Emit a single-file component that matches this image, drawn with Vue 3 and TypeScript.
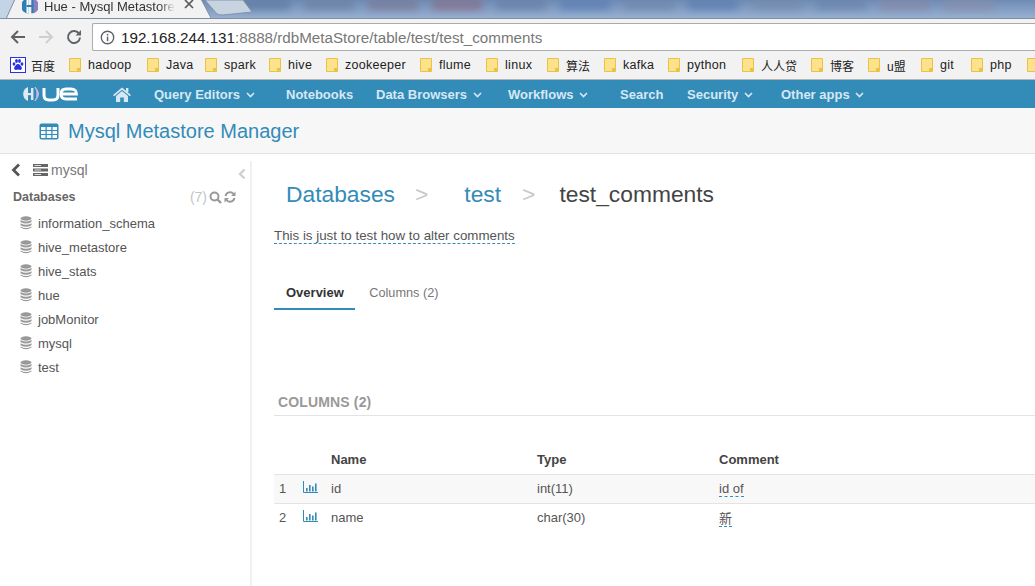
<template>
  <div class="page">
    <div class="tabstrip">
      <div class="blur-row">
        <span v-for="(c, i) in blurs" :key="i" class="blur" :style="{ background: c }"></span>
      </div>
      <svg class="tab-shape" width="260" height="19" viewBox="0 0 260 19">
        <path d="M0 0 H15 L7 18 H0 Z" fill="#c4d4e7" />
        <path d="M205 0 L217 14 Q219 15 223 15 L252 12 L243 0 Z" fill="#c8d3e0" stroke="#8094ad" />
        <path d="M6 19 L15 -1 L201 -1 L211 18 L211 19 Z" fill="#f2f2f2" stroke="#7f8fa3" />
      </svg>
      <div class="tab">
        <svg class="favicon" width="16" height="16" viewBox="0 0 16 16">
          <path d="M6.5 0.5 A7.5 7.5 0 0 0 6.5 15.5 Z" fill="#2f7fb6" />
          <path d="M9.5 0.5 A7.5 7.5 0 0 1 9.5 15.5 Z" fill="#8b7fc0" />
          <rect x="4.5" y="1" width="2" height="14" fill="#fff" />
          <rect x="9.5" y="1" width="2" height="14" fill="#2f7fb6" />
          <rect x="4.5" y="7" width="7" height="2" fill="#2f7fb6" />
        </svg>
        <span class="tab-title">Hue - Mysql Metastore</span>
        <svg class="tab-close" width="10" height="10" viewBox="0 0 10 10">
          <path d="M1 1 L9 9 M9 1 L1 9" stroke="#5a5a5a" stroke-width="1.7" />
        </svg>
      </div>
    </div>

    <div class="toolbar">
      <svg width="16" height="16" viewBox="0 0 16 16" class="nav-btn">
        <path d="M15 8 H2.5 M8 2 L2 8 L8 14" fill="none" stroke="#5f6368" stroke-width="2" />
      </svg>
      <svg width="16" height="16" viewBox="0 0 16 16" class="nav-btn">
        <path d="M1 8 H13.5 M8 2 L14 8 L8 14" fill="none" stroke="#cfcfcf" stroke-width="2" />
      </svg>
      <svg width="16" height="16" viewBox="0 0 16 16" class="nav-btn">
        <path d="M13.2 5 A6 6 0 1 0 14 8.5" fill="none" stroke="#5f6368" stroke-width="2" />
        <path d="M9.5 6.5 H15 V1 Z" fill="#5f6368" />
      </svg>
      <div class="omnibox">
        <svg width="15" height="15" viewBox="0 0 15 15" class="info">
          <circle cx="7.5" cy="7.5" r="6.2" fill="none" stroke="#5f6368" stroke-width="1.4" />
          <rect x="6.8" y="6.6" width="1.5" height="4.6" fill="#5f6368" />
          <rect x="6.8" y="3.9" width="1.5" height="1.6" fill="#5f6368" />
        </svg>
        <span class="host">192.168.244.131</span><span class="path">:8888/rdbMetaStore/table/test/test_comments</span>
      </div>
    </div>

    <div class="bookmarks">
      <div class="bm baidu">
        <svg width="16" height="16" viewBox="0 0 16 16">
          <rect x="0.5" y="0.5" width="15" height="15" fill="#fff" stroke="#2932e1" />
          <g fill="#2932e1">
            <ellipse cx="4" cy="7" rx="1.4" ry="1.8" />
            <ellipse cx="6.5" cy="4" rx="1.4" ry="1.9" />
            <ellipse cx="9.5" cy="4" rx="1.4" ry="1.9" />
            <ellipse cx="12" cy="7" rx="1.4" ry="1.8" />
            <path d="M8 7 C6 7 5.5 9 4.5 10 C3.5 11.5 4.5 13 6 13 C7 13 7.5 12.6 8 12.6 C8.5 12.6 9 13 10 13 C11.5 13 12.5 11.5 11.5 10 C10.5 9 10 7 8 7 Z" />
          </g>
        </svg>
        <span class="bm-label cjk">百度</span>
      </div>
      <div v-for="b in bookmarks" :key="b.label" class="bm" :style="{ width: b.width + 'px' }">
        <svg width="12" height="14" viewBox="0 0 12 14" class="folder">
          <path d="M0.5 0.5 H11.5 V13.5 H0.5 Z" fill="#fde28d" stroke="#e9c343" />
          <rect x="8" y="10" width="3" height="3" fill="#e9c343" />
        </svg>
        <span class="bm-label" :class="{ cjk: hasCjk(b.label) }">{{ b.label }}</span>
      </div>
    </div>

    <nav class="navbar">
      <div class="logo">
        <svg width="56" height="16" viewBox="0 0 56 16">
          <path d="M6 1 A7.5 7.5 0 0 0 6 15 Z" fill="#dfe9f1" />
          <rect x="3.6" y="7" width="7" height="2.2" fill="#dfe9f1" />
          <rect x="9" y="2" width="2.4" height="12" fill="#dfe9f1" />
          <path d="M13 1 Q20 8 13 15 Q17 8 13 1 Z" fill="#cdb8e2" stroke="#cdb8e2" />
          <path d="M22 2 V9 Q22 14 27 14 H31 Q36 14 36 9 V2" fill="none" stroke="#fff" stroke-width="3" />
          <path d="M39 8 H54.5 Q54.5 3 49 3 H44 Q39 3 39 8 Q39 13 44 13 H55" fill="none" stroke="#fff" stroke-width="2.8" />
        </svg>
      </div>
      <svg class="home" width="18" height="15" viewBox="0 0 18 15">
        <path d="M9 0.5 L18 8 L16.8 9.2 L9 2.8 L1.2 9.2 L0 8 Z" fill="#d5e8f3" />
        <path d="M3 9 L9 4 L15 9 V15 H10.8 V10.5 H7.2 V15 H3 Z" fill="#d5e8f3" />
        <rect x="13" y="1" width="2.4" height="4" fill="#d5e8f3" />
      </svg>
      <div v-for="n in navItems" :key="n.label" class="nav-item" :style="{ width: n.width + 'px' }">
        {{ n.label }}
        <svg v-if="n.caret" class="caret" width="9" height="6" viewBox="0 0 9 6">
          <path d="M1 1 L4.5 4.5 L8 1" fill="none" stroke="#d5e8f3" stroke-width="1.6" />
        </svg>
      </div>
    </nav>

    <header class="subheader">
      <svg width="20" height="17" viewBox="0 0 20 17">
        <rect x="0.5" y="0.5" width="19" height="16" rx="2" fill="#338bb8" />
        <g fill="#f7f7f7">
          <rect x="2" y="4" width="4.5" height="3" />
          <rect x="7.75" y="4" width="4.5" height="3" />
          <rect x="13.5" y="4" width="4.5" height="3" />
          <rect x="2" y="8" width="4.5" height="3" />
          <rect x="7.75" y="8" width="4.5" height="3" />
          <rect x="13.5" y="8" width="4.5" height="3" />
          <rect x="2" y="12" width="4.5" height="3" />
          <rect x="7.75" y="12" width="4.5" height="3" />
          <rect x="13.5" y="12" width="4.5" height="3" />
        </g>
      </svg>
      <span>Mysql Metastore Manager</span>
    </header>

    <div class="body">
      <aside class="sidebar">
        <div class="side-top">
          <svg width="10" height="14" viewBox="0 0 10 14">
            <path d="M8 1.5 L2.5 7 L8 12.5" fill="none" stroke="#555" stroke-width="2.8" />
          </svg>
          <svg class="server" width="15" height="12" viewBox="0 0 15 12">
            <path d="M0 0 H15 V3 H0 Z M0 4.5 H15 V7.5 H0 Z M0 9 H15 V12 H0 Z" fill="#666" />
            <path d="M1.5 1.5 H8 M1.5 6 H8 M1.5 10.5 H8" stroke="#ddd" />
          </svg>
          <span class="side-db">mysql</span>
          <svg class="collapse" width="8" height="12" viewBox="0 0 8 12">
            <path d="M6.5 1.5 L2 6 L6.5 10.5" fill="none" stroke="#d0d0d0" stroke-width="2.4" />
          </svg>
        </div>
        <div class="side-head">
          <span class="side-title">Databases</span>
          <span class="side-count">(7)</span>
          <svg width="13" height="13" viewBox="0 0 13 13">
            <circle cx="5.5" cy="5.5" r="4" fill="none" stroke="#999" stroke-width="2" />
            <path d="M8.5 8.5 L12 12" stroke="#999" stroke-width="2.4" />
          </svg>
          <svg width="12" height="12" viewBox="0 0 12 12">
            <path d="M1.5 5 A4.6 4.6 0 0 1 9.6 3 M10.5 7 A4.6 4.6 0 0 1 2.4 9" fill="none" stroke="#999" stroke-width="1.9" />
            <path d="M11.5 0.5 V5 H7 Z M0.5 11.5 V7 H5 Z" fill="#999" />
          </svg>
        </div>
        <ul class="db-list">
          <li v-for="db in databases" :key="db">
            <svg width="12" height="14" viewBox="0 0 12 14">
              <ellipse cx="6" cy="2.5" rx="5.5" ry="2.2" fill="#999" />
              <path d="M0.5 4 Q6 7 11.5 4 V6 Q6 9 0.5 6 Z M0.5 7.2 Q6 10.2 11.5 7.2 V9.2 Q6 12.2 0.5 9.2 Z M0.5 10.4 Q6 13.4 11.5 10.4 V11.5 Q6 14.8 0.5 11.5 Z" fill="#999" />
            </svg>
            <span>{{ db }}</span>
          </li>
        </ul>
      </aside>

      <main class="content">
        <div class="crumbs">
          <a class="crumb">Databases</a>
          <span class="sep sep-a">&gt;</span>
          <a class="crumb">test</a>
          <span class="sep sep-b">&gt;</span>
          <span class="crumb-current">test_comments</span>
        </div>
        <div class="desc"><span class="editable">This is just to test how to alter comments</span></div>
        <div class="tabs">
          <div class="tab-link active">Overview</div>
          <div class="tab-link">Columns (2)</div>
        </div>
        <div class="section-title">COLUMNS (2)</div>
        <table class="cols">
          <thead>
            <tr>
              <th class="c-num"></th>
              <th class="c-icon"></th>
              <th class="c-name">Name</th>
              <th class="c-type">Type</th>
              <th>Comment</th>
            </tr>
          </thead>
          <tbody>
            <tr v-for="(col, i) in columns" :key="col.name" :class="{ odd: i === 0 }">
              <td class="c-num">{{ i + 1 }}</td>
              <td class="c-icon">
                <svg width="15" height="12" viewBox="0 0 15 12">
                  <path d="M0.5 0 V11.5 H15" fill="none" stroke="#338bb8" />
                  <rect x="3" y="7" width="1.6" height="3.5" fill="#338bb8" />
                  <rect x="6" y="4" width="1.6" height="6.5" fill="#338bb8" />
                  <rect x="9" y="5.5" width="1.6" height="5" fill="#338bb8" />
                  <rect x="12" y="2.5" width="1.6" height="8" fill="#338bb8" />
                </svg>
              </td>
              <td>{{ col.name }}</td>
              <td>{{ col.type }}</td>
              <td><span class="editable">{{ col.comment }}</span></td>
            </tr>
          </tbody>
        </table>
      </main>
    </div>
  </div>
</template>

<script setup lang="ts">
const blurs = ['#56709a', '#6a7a99', '#7b6f88', '#8c5f74', '#62789f', '#4f76b0', '#6a82a6', '#4f74ad', '#7388a6', '#667fa6', '#8a86a0', '#8c8ca5']

const bookmarks = [
  { label: 'hadoop', width: 78 },
  { label: 'Java', width: 58 },
  { label: 'spark', width: 64 },
  { label: 'hive', width: 57 },
  { label: 'zookeeper', width: 94 },
  { label: 'flume', width: 66 },
  { label: 'linux', width: 61 },
  { label: '算法', width: 57 },
  { label: 'kafka', width: 64 },
  { label: 'python', width: 74 },
  { label: '人人贷', width: 69 },
  { label: '博客', width: 57 },
  { label: 'u盟', width: 53 },
  { label: 'git', width: 50 },
  { label: 'php', width: 56 },
  { label: '', width: 12 },
]

const navItems = [
  { label: 'Query Editors', width: 132, caret: true },
  { label: 'Notebooks', width: 90, caret: false },
  { label: 'Data Browsers', width: 132, caret: true },
  { label: 'Workflows', width: 112, caret: true },
  { label: 'Search', width: 67, caret: false },
  { label: 'Security', width: 94, caret: true },
  { label: 'Other apps', width: 100, caret: true },
]

const databases = ['information_schema', 'hive_metastore', 'hive_stats', 'hue', 'jobMonitor', 'mysql', 'test']

const columns = [
  { name: 'id', type: 'int(11)', comment: 'id of' },
  { name: 'name', type: 'char(30)', comment: '新' },
]

function hasCjk(label: string): boolean {
  return /[\u4e00-\u9fff]/.test(label)
}
</script>

<style>
html, body {
  margin: 0;
  background: #fff;
  overflow: hidden;
}
</style>

<style scoped>
.page {
  width: 1035px;
  height: 586px;
  overflow: hidden;
  display: flex;
  flex-direction: column;
  font-family: "Liberation Sans", "Noto Sans CJK SC", sans-serif;
  color: #444;
  font-size: 13px;
}

.tabstrip {
  position: relative;
  height: 19px;
  background: linear-gradient(#6f8bb4, #97b0d2);
  border-bottom: 1px solid #7f8fa3;
  box-sizing: border-box;
  overflow: hidden;
  flex: none;
}
.blur-row {
  display: flex;
  gap: 14px;
  padding: 1px 0 0 240px;
}
.blur {
  width: 50px;
  height: 8px;
  flex: none;
  filter: blur(4px);
  opacity: 0.75;
}
.tab-shape {
  position: absolute;
  left: 0;
  top: 0;
}
.tab {
  position: absolute;
  left: 22px;
  top: -2px;
  display: flex;
  align-items: center;
  width: 172px;
  height: 16px;
}
.favicon {
  flex: none;
}
.tab-title {
  margin-left: 6px;
  white-space: nowrap;
  color: #333;
  font-size: 13px;
  -webkit-mask-image: linear-gradient(90deg, #000 88%, transparent);
  mask-image: linear-gradient(90deg, #000 88%, transparent);
}
.tab-close {
  position: absolute;
  left: 162px;
  top: 1px;
}

.toolbar {
  height: 32px;
  background: #f2f2f2;
  display: flex;
  align-items: center;
  padding: 4px 0 0 10px;
  flex: none;
  box-sizing: border-box;
}
.nav-btn {
  margin-right: 12px;
  flex: none;
}
.omnibox {
  flex: 1;
  height: 28px;
  margin-left: -2px;
  background: #fff;
  border: 1px solid #ababab;
  border-right: none;
  border-radius: 2px 0 0 2px;
  display: flex;
  align-items: center;
  box-sizing: border-box;
  font-size: 15.2px;
  white-space: nowrap;
}
.info {
  margin: 0 6px 0 7px;
}
.host {
  color: #222;
}
.path {
  color: #777;
}

.bookmarks {
  height: 29px;
  background: #f2f2f2;
  border-bottom: 1px solid #b5b5b5;
  box-sizing: border-box;
  display: flex;
  align-items: center;
  padding-left: 10px;
  flex: none;
  white-space: nowrap;
}
.bm {
  display: flex;
  align-items: center;
  flex: none;
  font-size: 12.5px;
  color: #222;
}
.baidu {
  width: 59px;
}
.bm-label {
  margin-left: 5px;
  letter-spacing: 0.3px;
}
.bm-label.cjk {
  font-size: 12px;
  letter-spacing: 0;
}
.folder {
  flex: none;
  margin-left: 0;
}
.bm .folder + .bm-label {
  margin-left: 7px;
}

.navbar {
  height: 28px;
  background: #338bb8;
  display: flex;
  align-items: center;
  flex: none;
  color: #d5e8f3;
  font-weight: bold;
  font-size: 13px;
  white-space: nowrap;
}
.logo {
  width: 113px;
  padding-left: 22px;
  box-sizing: border-box;
  display: flex;
  align-items: center;
}
.home {
  flex: none;
  margin-right: 23px;
}
.nav-item {
  flex: none;
  box-sizing: border-box;
}
.caret {
  margin-left: 2px;
  vertical-align: 1px;
}

.subheader {
  height: 46px;
  background: #f7f7f7;
  border-bottom: 1px solid #e3e3e3;
  box-sizing: border-box;
  display: flex;
  align-items: center;
  padding: 2px 0 0 39px;
  gap: 9px;
  flex: none;
  color: #338bb8;
  font-size: 20px;
}

.body {
  flex: 1;
  display: flex;
  min-height: 0;
}

.sidebar {
  width: 252px;
  flex: none;
  box-sizing: border-box;
  border-right: 2px solid #f0f0f0;
  margin-top: 7px;
  position: relative;
}
.side-top {
  display: flex;
  align-items: center;
  height: 18px;
  padding-left: 11px;
}
.server {
  margin-left: 12px;
}
.side-db {
  margin-left: 3px;
  font-size: 14px;
  color: #777;
}
.collapse {
  position: absolute;
  left: 238px;
  top: 7px;
}
.side-head {
  display: flex;
  align-items: center;
  height: 18px;
  margin-top: 9px;
  padding: 0 14px 0 13px;
  gap: 2px;
}
.side-title {
  font-weight: bold;
  font-size: 12.5px;
  color: #666;
  flex: 1;
}
.side-count {
  color: #c4c4c4;
  font-size: 14px;
}
.db-list {
  list-style: none;
  margin: 5px 0 0;
  padding: 0 0 0 20px;
}
.db-list li {
  height: 24px;
  display: flex;
  align-items: center;
  color: #555;
  font-size: 13px;
}
.db-list span {
  margin-left: 6px;
}

.content {
  flex: 1;
  padding-left: 22px;
  min-width: 0;
}
.crumbs {
  display: flex;
  align-items: baseline;
  height: 28px;
  margin-top: 27px;
  font-size: 22.8px;
  padding-left: 12px;
  white-space: nowrap;
}
.crumb {
  color: #338bb8;
}
.crumb-current {
  color: #444;
}
.sep {
  color: #c8c8c8;
}
.sep-a {
  margin: 0 36px 0 20px;
}
.sep-b {
  margin: 0 24px 0 21px;
}
.editable {
  border-bottom: 1px dashed #338bb8;
}
.desc {
  margin-top: 18px;
  line-height: 17px;
  font-size: 13.33px;
  color: #555;
}
.tabs {
  display: flex;
  margin-top: 35px;
  height: 31px;
}
.tab-link {
  padding: 0 14px;
  height: 31px;
  line-height: 28px;
  box-sizing: border-box;
  color: #777;
  font-size: 12.7px;
}
.tab-link.active {
  padding: 0 11.5px 0 12px;
  color: #333;
  font-size: 13px;
  font-weight: bold;
  border-bottom: 2px solid #338bb8;
}
.section-title {
  margin-top: 83px;
  padding: 0 0 3px 4px;
  line-height: 19px;
  font-weight: bold;
  font-size: 14px;
  letter-spacing: 0.15px;
  color: #999;
  border-bottom: 1px solid #e3e3e3;
}
.cols {
  width: 100%;
  margin-top: 28px;
  border-collapse: collapse;
  table-layout: fixed;
}
.cols th {
  text-align: left;
  height: 30px;
  padding: 0;
  font-size: 13px;
  color: #444;
}
.cols td {
  height: 29px;
  padding: 0 0 1px;
  box-sizing: border-box;
  border-top: 1px solid #e3e3e3;
  font-size: 13px;
  color: #555;
}
.cols tr.odd td {
  background: #f8f8f8;
}
.c-num {
  width: 29px;
  padding-left: 5px !important;
  box-sizing: border-box;
  font-size: 14px;
}
.c-icon {
  width: 28px;
}
.c-name {
  width: 206px;
}
.c-type {
  width: 182px;
}
</style>
